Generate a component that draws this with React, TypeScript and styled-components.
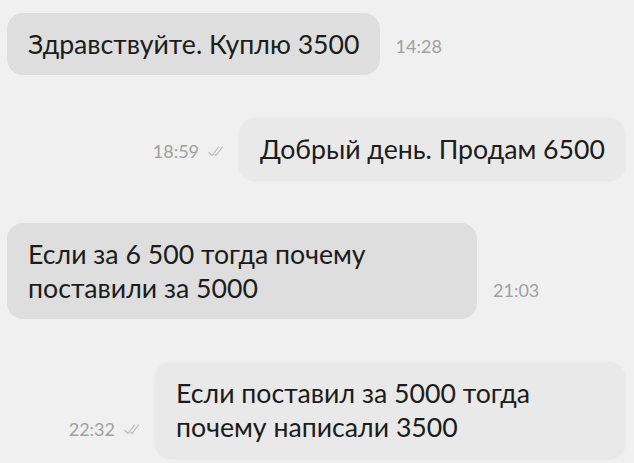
import React from 'react';
import styled, { createGlobalStyle } from 'styled-components';

type Message = {
  id: number;
  text: string;
  time: string;
  mine: boolean;
};

const messages: Message[] = [
  { id: 1, text: 'Здравствуйте. Куплю 3500', time: '14:28', mine: false },
  { id: 2, text: 'Добрый день. Продам 6500', time: '18:59', mine: true },
  { id: 3, text: 'Если за 6 500 тогда почему поставили за 5000', time: '21:03', mine: false },
  { id: 4, text: 'Если поставил за 5000 тогда почему написали 3500', time: '22:32', mine: true },
];

function ReadTicks() {
  return (
    <Ticks width="20" height="12" viewBox="0 0 20 12" fill="none">
      <path d="M1 7.5 L4 10.5 L10.5 2" stroke="currentColor" strokeWidth="1.2" strokeLinecap="round" strokeLinejoin="round" />
      <path d="M7 9.5 L8 10.5 L14.5 2" stroke="currentColor" strokeWidth="1.2" strokeLinecap="round" strokeLinejoin="round" />
    </Ticks>
  );
}

function App() {
  return (
    <>
      <GlobalStyle />
      <ChatList>
        {messages.map(({ id, text, time, mine }) => (
          <Row key={id} $mine={mine}>
            {mine ? (
              <>
                <Meta>
                  <Time>{time}</Time>
                  <ReadTicks />
                </Meta>
                <Bubble $mine>{text}</Bubble>
              </>
            ) : (
              <>
                <Bubble>{text}</Bubble>
                <Meta>
                  <Time>{time}</Time>
                </Meta>
              </>
            )}
          </Row>
        ))}
      </ChatList>
    </>
  );
}

const GlobalStyle = createGlobalStyle`
  html, body {
    margin: 0;
    padding: 0;
    background: #f0f0f0;
  }
  body {
    font-family: 'Lato', 'Noto Sans', sans-serif;
    color: #1c1c1c;
  }
`;

const ChatList = styled.div`
  display: flex;
  flex-direction: column;
  gap: 43px;
  padding: 13px 9px 0 7px;
  height: 463px;
  box-sizing: border-box;
  overflow: hidden;
`;

const Row = styled.div<{ $mine?: boolean }>`
  display: flex;
  align-items: flex-end;
  justify-content: ${(p) => (p.$mine ? 'flex-end' : 'flex-start')};
  gap: ${(p) => (p.$mine ? '11px' : '16px')};
`;

const Bubble = styled.div<{ $mine?: boolean }>`
  max-width: 470px;
  box-sizing: border-box;
  padding: 14px 20px 14px 21px;
  border-radius: 16px;
  background: ${(p) => (p.$mine ? '#e9e9e9' : '#dedede')};
  box-shadow: ${(p) => (p.$mine ? '0 1px 3px rgba(0, 0, 0, 0.05)' : 'none')};
  font-size: 26.7px;
  line-height: 34px;
`;

const Meta = styled.div`
  display: flex;
  align-items: center;
  gap: 9px;
  padding-bottom: 19px;
`;

const Time = styled.span`
  font-size: 18px;
  line-height: 20px;
  color: #a0a0a0;
`;

const Ticks = styled.svg`
  color: #b8b8b8;
  display: block;
`;

export default App;
